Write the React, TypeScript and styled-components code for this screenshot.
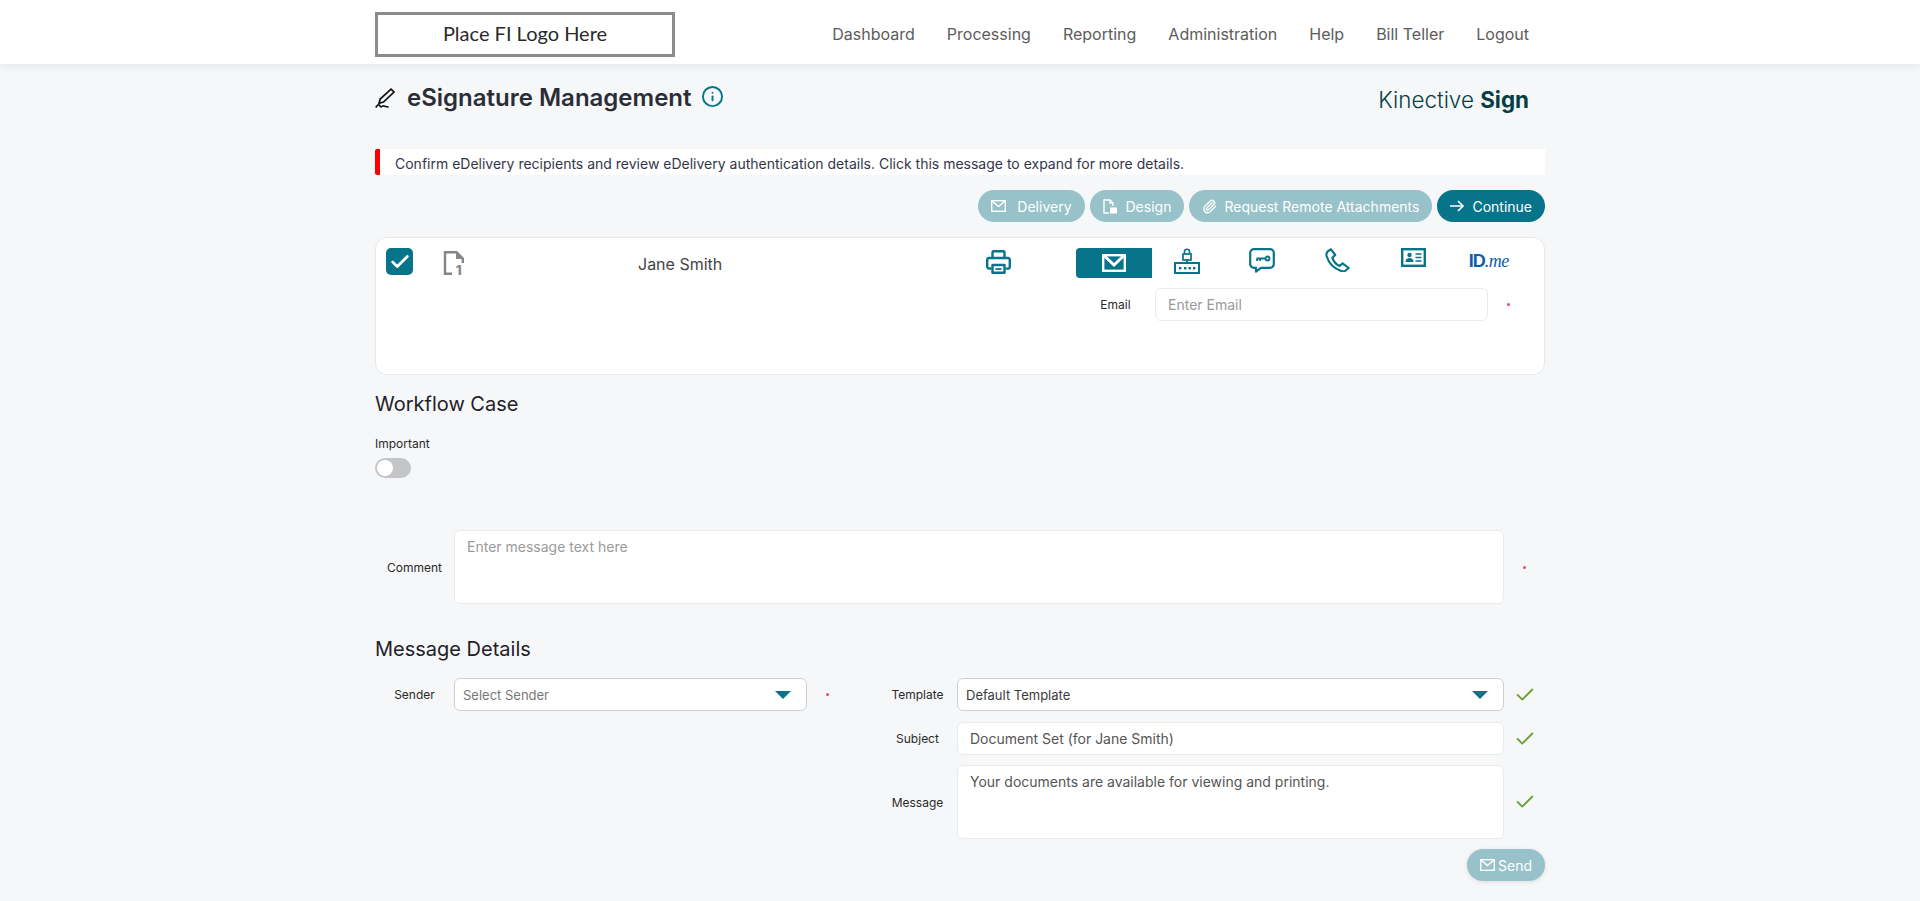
import React from "react";
import styled, { createGlobalStyle } from "styled-components";
import { Check, Info, Paperclip } from "lucide-react";

const teal = "#07748a";
const faded = "#98c2ca";

const Global = createGlobalStyle`
  html, body { margin: 0; padding: 0; background: #f6f7f9; }
  body { font-family: Inter, "Liberation Sans", sans-serif; color: #2b2d36; overflow: hidden; }
  * { box-sizing: border-box; }
`;

const Page = styled.div`height: 901px;`;
const Header = styled.header`
  height: 64px;
  background: #fff;
  box-shadow: 0 2px 8px rgba(60, 70, 80, 0.1);
`;
const Container = styled.div`
  width: 1170px;
  margin: 0 auto;
`;
const HeaderInner = styled(Container)`
  display: flex;
  justify-content: space-between;
  height: 64px;
  padding-top: 12px;
`;
const LogoBox = styled.div`
  width: 300px;
  height: 45px;
  border: 3px solid #8c8c8c;
  padding-bottom: 4px;
  display: flex;
  align-items: center;
  justify-content: center;
  font-family: Lato, sans-serif;
  font-size: 20px;
  color: #2a2a2a;
`;
const Nav = styled.nav`
  display: flex;
  gap: 32px;
  padding-right: 16px;
  height: 44px;
  align-items: center;
`;
const NavLink = styled.a`
  font-size: 16px;
  color: #5c5c5c;
`;
const TitleRow = styled.div`
  display: flex;
  justify-content: space-between;
  align-items: flex-start;
  height: 85px;
  padding: 18px 16px 0 0;
`;
const TitleGroup = styled.div`
  display: flex;
  align-items: center;
  height: 32px;
`;
const Title = styled.h1`
  margin: 0 9px 0 12px;
  font-size: 24px;
  font-weight: 600;
  line-height: 32px;
  color: #2b2d36;
`;
const InfoWrap = styled.span`
  display: flex;
  margin-bottom: 3px;
`;
const Brand = styled.div`
  font-size: 22.4px;
  font-weight: 300;
  color: #063e46;
  line-height: 36px;
  b { font-weight: 700; }
`;
const Alert = styled.div`
  height: 26px;
  background: #fff;
  border-left: 5px solid #f00;
  border-radius: 2px 0 0 2px;
  padding: 4px 0 0 15px;
  font-size: 14px;
  line-height: 22px;
  color: #33364a;
`;
const Actions = styled.div`
  display: flex;
  justify-content: flex-end;
  gap: 5px;
  margin-top: 15px;
`;
const Pill = styled.button<{ $active?: boolean; $gap: number }>`
  display: flex;
  align-items: center;
  gap: ${(p) => p.$gap}px;
  height: 32px;
  padding: 0 13px;
  border: 0;
  border-radius: 16px;
  background: ${(p) => (p.$active ? teal : faded)};
  color: #fff;
  font-family: inherit;
  font-size: 14px;
`;
const Card = styled.section`
  display: flex;
  height: 138px;
  margin-top: 15px;
  padding: 10px 0 0 10px;
  background: #fff;
  border: 1px solid #e6e8ea;
  border-radius: 12px;
`;
const CardMain = styled.div`
  display: grid;
  grid-template-columns: 57px 195px 348px 90px;
  align-items: start;
  height: 30px;
`;
const CheckBox = styled.div`
  width: 27px;
  height: 27px;
  border-radius: 5px;
  background: ${teal};
  color: #fff;
  display: flex;
  align-items: center;
  justify-content: center;
`;
const DocWrap = styled.div`
  padding-top: 3px;
  height: 30px;
`;
const Name = styled.div`
  font-size: 16px;
  line-height: 32px;
  color: #444;
`;
const PrinterWrap = styled.div`
  padding-top: 2px;
`;
const CardSide = styled.div`
  display: flex;
  flex-direction: column;
`;
const Tabs = styled.div`
  display: flex;
  height: 30px;
`;
const Tab = styled.div<{ $active?: boolean }>`
  width: ${(p) => (p.$active ? 76 : 75.5)}px;
  margin-right: ${(p) => (p.$active ? -3 : 0)}px;
  height: 30px;
  display: flex;
  align-items: ${(p) => (p.$active ? "center" : "flex-start")};
  justify-content: center;
  background: ${(p) => (p.$active ? teal : "transparent")};
  border-radius: ${(p) => (p.$active ? "4px 0 0 4px" : "0")};
`;
const IdMark = styled.div`
  display: flex;
  align-items: baseline;
  color: #0b5cab;
  height: 24px;
  padding-top: 3px;
  line-height: 20px;
  font-family: "Liberation Sans", sans-serif;
  font-size: 18px;
  font-weight: 700;
  letter-spacing: -1px;
  i {
    font-family: "Liberation Serif", serif;
    font-size: 18px;
    font-weight: 400;
    letter-spacing: -0.5px;
  }
`;
const Row = styled.div<{ $top?: number }>`
  display: flex;
  align-items: center;
  margin-top: ${(p) => p.$top ?? 0}px;
`;
const Label = styled.label`
  flex: 0 0 79px;
  text-align: center;
  font-size: 12px;
  color: #2a2a2a;
`;
const TextInput = styled.input<{ $w?: number }>`
  flex: ${(p) => (p.$w ? `0 0 ${p.$w}px` : "1")};
  min-width: 0;
  height: 33px;
  padding: 0 12px;
  border: 1px solid #e9eaec;
  border-radius: 6px;
  background: #fff;
  font-family: inherit;
  font-size: 14px;
  color: #555;
  outline: none;
  &::placeholder { color: #9a9a9a; opacity: 1; }
`;
const TextBlock = styled.textarea`
  flex: 1;
  height: 74px;
  padding: 7px 12px;
  border: 1px solid #e9eaec;
  border-radius: 6px;
  background: #fff;
  font-family: inherit;
  font-size: 14px;
  line-height: 18px;
  color: #555;
  resize: none;
  outline: none;
  &::placeholder { color: #9a9a9a; opacity: 1; }
`;
const Status = styled.div`
  flex: 0 0 41px;
  display: flex;
  align-items: center;
  justify-content: center;
  color: #6aa332;
`;
const RedDot = styled.span`
  width: 3px;
  height: 3px;
  border-radius: 50%;
  background: #e64a62;
`;
const Heading = styled.h2<{ $top: number }>`
  margin: ${(p) => p.$top}px 0 0;
  font-size: 20px;
  font-weight: 400;
  line-height: 24px;
  color: #1f2128;
`;
const SmallLabel = styled.div`
  margin-top: 20px;
  font-size: 12px;
  line-height: 16px;
  color: #2a2a2a;
`;
const Toggle = styled.div`
  width: 36px;
  height: 20px;
  margin-top: 6px;
  padding: 2px;
  border-radius: 10px;
  background: #c4c5c7;
`;
const Knob = styled.div`
  width: 16px;
  height: 16px;
  border-radius: 50%;
  background: #fff;
`;
const Columns = styled.div`
  display: flex;
  margin-top: 17px;
`;
const LeftCol = styled.div`
  flex: 0 0 503px;
`;
const RightCol = styled.div`
  display: flex;
  flex-direction: column;
  flex: 1;
`;
const Select = styled.div<{ $w?: number; $muted?: boolean }>`
  flex: ${(p) => (p.$w ? `0 0 ${p.$w}px` : "1")};
  height: 33px;
  display: flex;
  align-items: center;
  justify-content: space-between;
  padding: 0 15px 0 8px;
  background: #fff;
  border: 1px solid #cdd0d3;
  border-radius: 6px;
  font-size: 13px;
  color: ${(p) => (p.$muted ? "#777" : "#3a3a3a")};
`;
const Caret = styled.span`
  width: 0;
  height: 0;
  border-left: 8px solid transparent;
  border-right: 8px solid transparent;
  border-top: 8px solid ${teal};
`;
const SendRow = styled.div`
  display: flex;
  justify-content: flex-end;
  margin-top: 10px;
`;
const SendButton = styled(Pill)`
  box-shadow: 0 1px 4px rgba(60, 70, 80, 0.15);
`;

const MailThin = () => (
  <svg width="15" height="12" viewBox="0 0 15 12" fill="none" stroke="#fff" strokeWidth="1.4">
    <rect x="0.7" y="0.7" width="13.6" height="10.6" />
    <path d="M1 1l6.5 5.5L14 1" />
  </svg>
);
const DesignIcon = () => (
  <svg width="14" height="15" viewBox="0 0 14 15" fill="none" stroke="#fff" strokeWidth="1.4">
    <path d="M6 14H1V1h6l3 3v3" />
    <path d="M7 1v3h3" />
    <rect x="7" y="8.5" width="7" height="6" fill="#fff" stroke="none" />
  </svg>
);
const ArrowIcon = () => (
  <svg width="14" height="12" viewBox="0 0 14 12" fill="none" stroke="#fff" strokeWidth="1.6">
    <path d="M0 6h13M8 1l5 5-5 5" />
  </svg>
);
const SignatureIcon = () => (
  <svg width="20" height="21" viewBox="0 0 20 21" fill="none" stroke="#111" strokeWidth="1.7">
    <path d="M16 1.200l3 2.800-10.500 10-4.500 1.300 1.200-4.300z" />
    <path d="M.800 19.500c1.500-2.700 3.200-3.500 3.700-2.200.5 1.400 1.700 2 3 .9 1.300-1.100 2.700.9 6 .6" />
  </svg>
);
const DocIcon = () => (
  <svg width="21" height="25" viewBox="0 0 21 25" fill="none">
    <path d="M9 22.800H2V1.200h11.500L19.800 7.500V12" stroke="#868686" strokeWidth="2.400" />
    <path d="M13 1v7h7z" fill="#868686" />
    <text x="12.800" y="24" fontFamily="Inter, sans-serif" fontWeight="800" fontSize="13.500" fill="#868686">1</text>
  </svg>
);
const PrinterIcon = () => (
  <svg width="25" height="24" viewBox="0 0 25 24" fill="none" stroke={teal} strokeWidth="2.400" strokeLinejoin="round">
    <path d="M6.500 8V2.200a1 1 0 0 1 1-1h10a1 1 0 0 1 1 1V8" />
    <path d="M5.500 18.500H3a1.800 1.800 0 0 1-1.800-1.800v-7A1.800 1.800 0 0 1 3 8h19a1.800 1.800 0 0 1 1.800 1.800v7a1.800 1.800 0 0 1-1.800 1.800h-2.500" />
    <rect x="6.500" y="15" width="12" height="7.800" />
    <path d="M9.500 19h6" strokeWidth="1.800" />
  </svg>
);
const MailBold = () => (
  <svg width="24" height="18" viewBox="0 0 24 18" fill="none" stroke="#fff">
    <rect x="1.200" y="1.200" width="21.600" height="15.600" strokeWidth="2.400" />
    <path d="M2 1.500L12 11l10-9.500" strokeWidth="3" />
  </svg>
);
const RouterLockIcon = () => (
  <svg width="26" height="26" viewBox="0 0 26 26" fill="none" stroke={teal} strokeWidth="2">
    <rect x="1" y="15" width="24" height="10" />
    <path d="M13 12v3" />
    <rect x="9" y="6" width="8" height="6" strokeWidth="1.700" />
    <path d="M10.500 6V3.800a2.500 2.500 0 0 1 5 0V6" strokeWidth="1.600" />
    <g fill={teal} stroke="none">
      <rect x="5" y="19" width="2.400" height="2.400" />
      <rect x="10" y="19" width="2.400" height="2.400" />
      <rect x="14.500" y="19" width="2.400" height="2.400" />
      <rect x="19" y="19" width="2.400" height="2.400" />
    </g>
  </svg>
);
const ChatKeyIcon = () => (
  <svg width="26" height="25" viewBox="0 0 26 25" fill="none" stroke={teal} strokeWidth="2.200" strokeLinejoin="round">
    <path d="M5 1.200h16a3.800 3.800 0 0 1 3.800 3.800v11a3.800 3.800 0 0 1-3.800 3.800H12l-5 3.800v-3.800H5A3.800 3.800 0 0 1 1.200 16V5A3.800 3.800 0 0 1 5 1.200z" />
    <circle cx="18.500" cy="10.500" r="2" strokeWidth="1.800" />
    <path d="M16.500 10.500H7.500M8 10.500v2.500M11 10.500v2.500" strokeWidth="1.800" />
  </svg>
);
const PhoneIcon = () => (
  <svg width="25" height="24" viewBox="0 0 25 24" fill="none" stroke={teal} strokeWidth="2.200" strokeLinejoin="round">
    <path d="M6 1.300L10.200 7 7.400 9.800c1.200 3.700 3.800 6.600 7.300 8.200l2.900-2.700 6 4.700-2.800 2.500c-1.200 1-2.800 1.100-4.300.6C8.800 20.500 3.600 14.800 1.600 8 1.100 6 1.500 4.500 3 3.200z" />
  </svg>
);
const IdCardIcon = () => (
  <svg width="25" height="19" viewBox="0 0 25 19" fill="none" stroke={teal} strokeWidth="2.400">
    <rect x="1.200" y="1.200" width="22.600" height="16.600" />
    <circle cx="8.500" cy="7" r="2.200" fill={teal} stroke="none" />
    <path d="M4.500 14c0-2.800 1.800-4 4-4s4 1.200 4 4z" fill={teal} stroke="none" />
    <path d="M14.500 6h6M14.500 9.500h6M14.500 13h6" strokeWidth="1.600" />
  </svg>
);

const navItems = ["Dashboard", "Processing", "Reporting", "Administration", "Help", "Bill Teller", "Logout"];

export default function App() {
  return (
    <Page>
      <Global />
      <Header>
        <HeaderInner>
          <LogoBox>Place FI Logo Here</LogoBox>
          <Nav>
            {navItems.map((n) => (
              <NavLink key={n}>{n}</NavLink>
            ))}
          </Nav>
        </HeaderInner>
      </Header>
      <Container>
        <TitleRow>
          <TitleGroup>
            <SignatureIcon />
            <Title>eSignature Management</Title>
            <InfoWrap><Info size={23} color={teal} strokeWidth={2} /></InfoWrap>
          </TitleGroup>
          <Brand>
            Kinective <b>Sign</b>
          </Brand>
        </TitleRow>
        <Alert>Confirm eDelivery recipients and review eDelivery authentication details. Click this message to expand for more details.</Alert>
        <Actions>
          <Pill $gap={11}><MailThin />Delivery</Pill>
          <Pill $gap={9}><DesignIcon />Design</Pill>
          <Pill $gap={7}><Paperclip size={15} color="#fff" strokeWidth={2.2} />Request Remote Attachments</Pill>
          <Pill $active $gap={8}><ArrowIcon />Continue</Pill>
        </Actions>
        <Card>
          <CardMain>
            <CheckBox><Check size={22} strokeWidth={3} /></CheckBox>
            <DocWrap><DocIcon /></DocWrap>
            <Name>Jane Smith</Name>
            <PrinterWrap><PrinterIcon /></PrinterWrap>
          </CardMain>
          <CardSide>
            <Tabs>
              <Tab $active><MailBold /></Tab>
              <Tab><RouterLockIcon /></Tab>
              <Tab><ChatKeyIcon /></Tab>
              <Tab><PhoneIcon /></Tab>
              <Tab><IdCardIcon /></Tab>
              <Tab><IdMark>ID<i>.me</i></IdMark></Tab>
            </Tabs>
            <Row $top={10}>
              <Label>Email</Label>
              <TextInput $w={333} placeholder="Enter Email" readOnly />
              <Status><RedDot /></Status>
            </Row>
          </CardSide>
        </Card>
        <Heading $top={17}>Workflow Case</Heading>
        <SmallLabel>Important</SmallLabel>
        <Toggle><Knob /></Toggle>
        <Row $top={52}>
          <Label>Comment</Label>
          <TextBlock placeholder="Enter message text here" readOnly />
          <Status><RedDot /></Status>
        </Row>
        <Heading $top={33}>Message Details</Heading>
        <Columns>
          <LeftCol>
            <Row>
              <Label>Sender</Label>
              <Select $w={353} $muted>Select Sender<Caret /></Select>
              <Status><RedDot /></Status>
            </Row>
          </LeftCol>
          <RightCol>
            <Row>
              <Label>Template</Label>
              <Select>Default Template<Caret /></Select>
              <Status><Check size={22} strokeWidth={2} /></Status>
            </Row>
            <Row $top={11}>
              <Label>Subject</Label>
              <TextInput defaultValue="Document Set (for Jane Smith)" readOnly />
              <Status><Check size={22} strokeWidth={2} /></Status>
            </Row>
            <Row $top={10}>
              <Label>Message</Label>
              <TextBlock defaultValue="Your documents are available for viewing and printing." readOnly />
              <Status><Check size={22} strokeWidth={2} /></Status>
            </Row>
            <SendRow>
              <SendButton $gap={3}><MailThin />Send</SendButton>
            </SendRow>
          </RightCol>
        </Columns>
      </Container>
    </Page>
  );
}
